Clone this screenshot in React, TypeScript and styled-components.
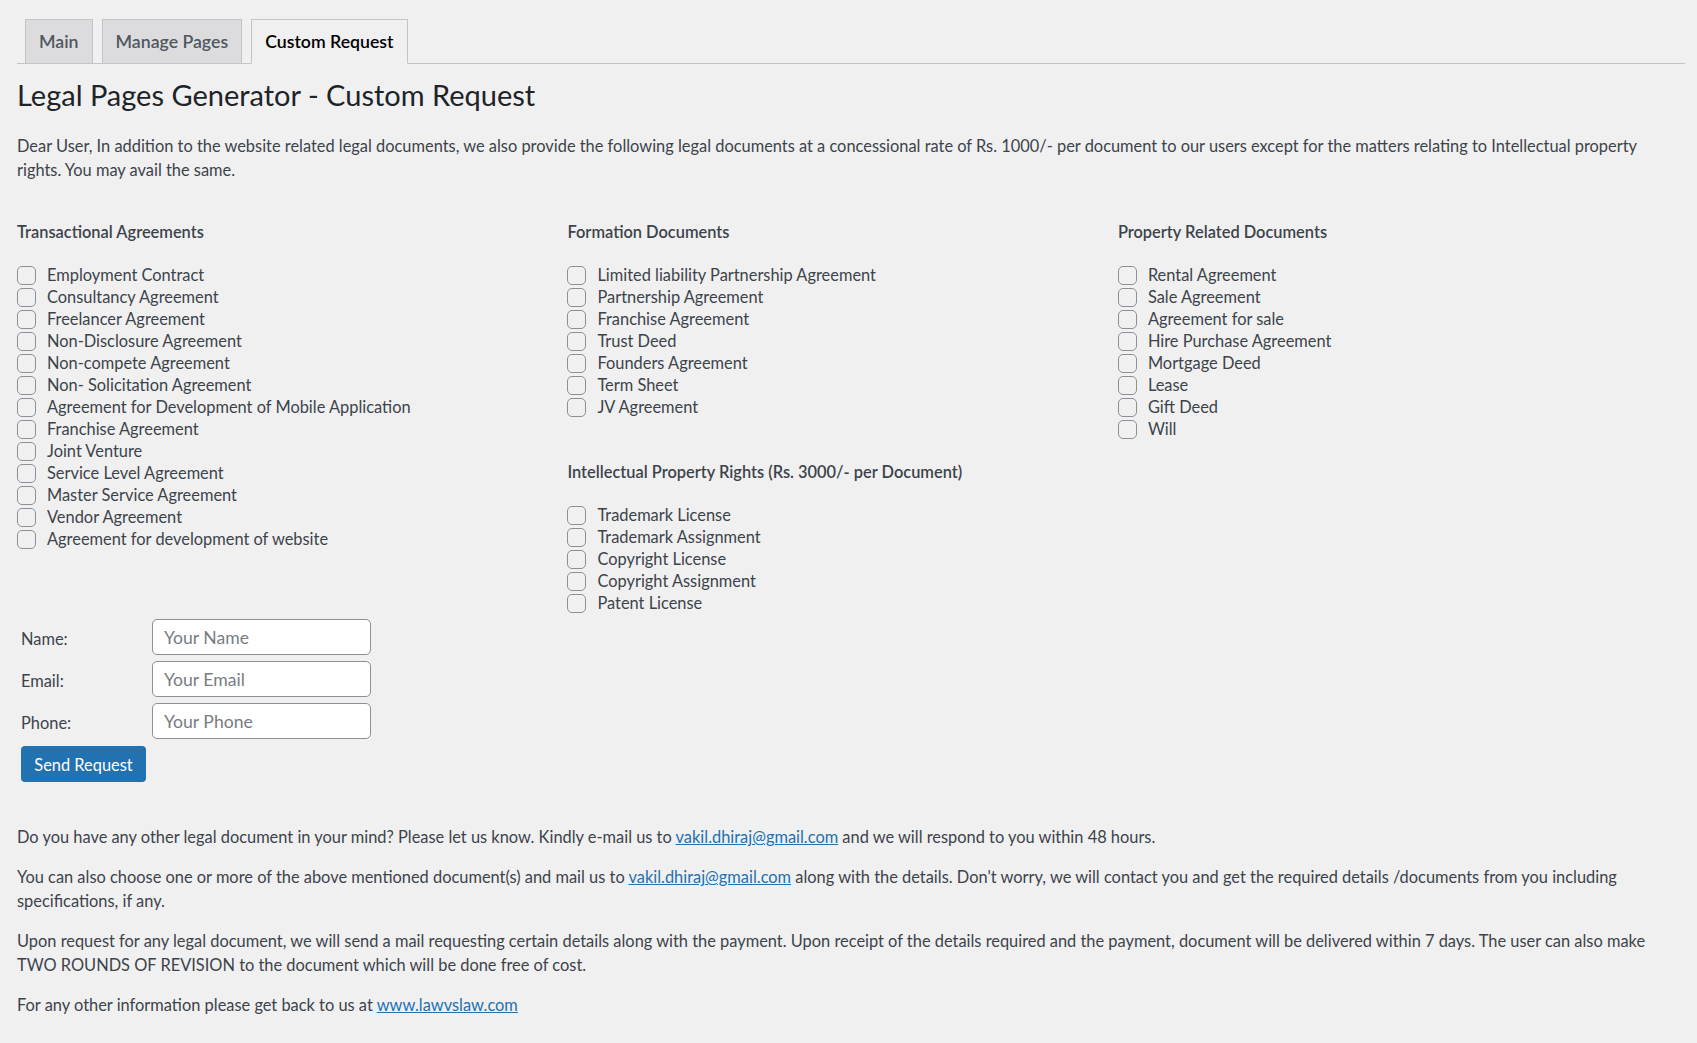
import React from "react";
import styled, { createGlobalStyle } from "styled-components";

const Global = createGlobalStyle`
  html, body { margin: 0; padding: 0; background: #f0f0f1; }
  body {
    font-family: Lato, "Open Sans", sans-serif;
    font-size: 16.4px;
    color: #3c434a;
    line-height: 1.5;
  }
  * { box-sizing: border-box; }
`;

const Wrap = styled.div`
  padding: 19px 12px 20px 17px;
`;

const TabBar = styled.nav`
  display: flex;
  align-items: flex-end;
  border-bottom: 1px solid #c3c4c7;
  padding-left: 8px;
  gap: 9px;
`;

const Tab = styled.a<{ $active?: boolean }>`
  display: block;
  height: 45px;
  margin-bottom: -1px;
  padding: 0 13px;
  font-size: 17.7px;
  font-weight: 600;
  line-height: 43px;
  border: 1px solid #c3c4c7;
  background: ${(p) => (p.$active ? "#f0f0f1" : "#dcdcde")};
  border-bottom-color: ${(p) => (p.$active ? "#f0f0f1" : "#c3c4c7")};
  color: ${(p) => (p.$active ? "#000" : "#50575e")};
  text-decoration: none;
`;

const Title = styled.h1`
  margin: 13px 0 0;
  font-size: 29px;
  font-weight: 400;
  line-height: 36px;
  color: #1d2327;
`;

const Para = styled.p`
  margin: 21px 0 0;
  line-height: 24px;
`;

const Columns = styled.div`
  display: flex;
  margin-top: 38px;
`;

const Column = styled.div`
  width: 33%;
`;

const SectionTitle = styled.div<{ $top?: number }>`
  font-weight: 600;
  line-height: 24px;
  margin-top: ${(p) => p.$top ?? 0}px;
  margin-bottom: 20px;
`;

const List = styled.div`
  display: flex;
  flex-direction: column;
`;

const Item = styled.label`
  display: flex;
  align-items: center;
  height: 22px;
  line-height: 22px;
`;

const Box = styled.input.attrs({ type: "checkbox" })`
  appearance: none;
  -webkit-appearance: none;
  width: 19px;
  height: 19px;
  margin: 0 11px 0 0;
  border: 1px solid #8c8f94;
  border-radius: 5px;
  background: transparent;
  flex: none;
`;

const FormTable = styled.table`
  border-spacing: 0;
  margin-top: 2px;
  td { padding: 0; vertical-align: middle; }
`;

const LabelCell = styled.td`
  width: 135px;
  padding: 4px 0 0 4px !important;
`;

const FieldRow = styled.tr`
  height: 42px;
`;

const Input = styled.input`
  width: 219px;
  height: 36px;
  border: 1px solid #8c8f94;
  border-radius: 5px;
  background: #fff;
  padding: 0 11px;
  font-family: inherit;
  font-size: 17.6px;
  color: #2c3338;
  &::placeholder { color: #787c82; }
`;

const Button = styled.button`
  margin: 4px 0 0 4px;
  width: 125px;
  height: 36px;
  border: 0;
  border-radius: 4px;
  background: #2271b1;
  color: #fff;
  font-family: inherit;
  font-size: 16.4px;
`;

const Footer = styled.div`
  margin-top: 43px;
`;

const FootPara = styled.p`
  margin: 0 0 16px;
  line-height: 24px;
`;

const Link = styled.a`
  color: #2271b1;
  text-decoration: underline;
`;

const transactional = [
  "Employment Contract",
  "Consultancy Agreement",
  "Freelancer Agreement",
  "Non-Disclosure Agreement",
  "Non-compete Agreement",
  "Non- Solicitation Agreement",
  "Agreement for Development of Mobile Application",
  "Franchise Agreement",
  "Joint Venture",
  "Service Level Agreement",
  "Master Service Agreement",
  "Vendor Agreement",
  "Agreement for development of website",
];
const formation = [
  "Limited liability Partnership Agreement",
  "Partnership Agreement",
  "Franchise Agreement",
  "Trust Deed",
  "Founders Agreement",
  "Term Sheet",
  "JV Agreement",
];
const ipr = [
  "Trademark License",
  "Trademark Assignment",
  "Copyright License",
  "Copyright Assignment",
  "Patent License",
];
const property = [
  "Rental Agreement",
  "Sale Agreement",
  "Agreement for sale",
  "Hire Purchase Agreement",
  "Mortgage Deed",
  "Lease",
  "Gift Deed",
  "Will",
];

const CheckList = ({ items }: { items: string[] }) => (
  <List>
    {items.map((t) => (
      <Item key={t}>
        <Box />
        {t}
      </Item>
    ))}
  </List>
);

export default function App() {
  return (
    <>
      <Global />
      <Wrap>
        <TabBar>
          <Tab href="#">Main</Tab>
          <Tab href="#">Manage Pages</Tab>
          <Tab href="#" $active>
            Custom Request
          </Tab>
        </TabBar>
        <Title>Legal Pages Generator - Custom Request</Title>
        <Para>
          Dear User, In addition to the website related legal documents, we also provide the following legal
          documents at a concessional rate of Rs. 1000/- per document to our users except for the matters relating
          to Intellectual property rights. You may avail the same.
        </Para>
        <Columns>
          <Column>
            <SectionTitle>Transactional Agreements</SectionTitle>
            <CheckList items={transactional} />
          </Column>
          <Column>
            <SectionTitle>Formation Documents</SectionTitle>
            <CheckList items={formation} />
            <SectionTitle $top={42}>Intellectual Property Rights (Rs. 3000/- per Document)</SectionTitle>
            <CheckList items={ipr} />
          </Column>
          <Column>
            <SectionTitle>Property Related Documents</SectionTitle>
            <CheckList items={property} />
          </Column>
        </Columns>
        <FormTable>
          <tbody>
            <FieldRow>
              <LabelCell>Name:</LabelCell>
              <td>
                <Input placeholder="Your Name" />
              </td>
            </FieldRow>
            <FieldRow>
              <LabelCell>Email:</LabelCell>
              <td>
                <Input placeholder="Your Email" />
              </td>
            </FieldRow>
            <FieldRow>
              <LabelCell>Phone:</LabelCell>
              <td>
                <Input placeholder="Your Phone" />
              </td>
            </FieldRow>
          </tbody>
        </FormTable>
        <Button>Send Request</Button>
        <Footer>
          <FootPara>
            Do you have any other legal document in your mind? Please let us know. Kindly e-mail us to{" "}
            <Link href="#">vakil.dhiraj@gmail.com</Link> and we will respond to you within 48 hours.
          </FootPara>
          <FootPara>
            You can also choose one or more of the above mentioned document(s) and mail us to{" "}
            <Link href="#">vakil.dhiraj@gmail.com</Link> along with the details. Don't worry, we will contact you and
            get the required details /documents from you including specifications, if any.
          </FootPara>
          <FootPara>
            Upon request for any legal document, we will send a mail requesting certain details along with the
            payment. Upon receipt of the details required and the payment, document will be delivered within 7 days.
            The user can also make TWO ROUNDS OF REVISION to the document which will be done free of cost.
          </FootPara>
          <FootPara>
            For any other information please get back to us at <Link href="#">www.lawvslaw.com</Link>
          </FootPara>
        </Footer>
      </Wrap>
    </>
  );
}
